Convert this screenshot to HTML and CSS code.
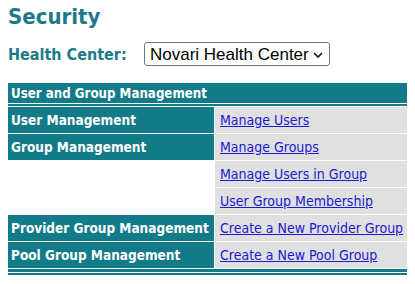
FILE: index.html
```html
<!DOCTYPE html>
<html lang="en">
<head>
    <meta charset="UTF-8">
    <meta name="viewport" content="width=device-width, initial-scale=1.0">
    <title>Security</title>
<link rel="stylesheet" href="styles.css">
</head>
<body>
    <h1 class="page-title">Security</h1>

    <div class="center-row">
        <label for="center" class="center-label">Health Center:</label>
        <span class="select-wrap">
            <select id="center" class="center-select">
                <option>Novari Health Center</option>
            </select>
            <svg class="select-arrow" width="10" height="6" viewBox="0 0 10 6"><path d="M1 1 L5 5 L9 1" fill="none" stroke="#111" stroke-width="1.6"/></svg>
        </span>
    </div>

    <table class="menu">
        <thead>
            <tr><th colspan="2">User and Group Management</th></tr>
            <tr class="rule"><td colspan="2"></td></tr>
        </thead>
        <tbody>
            <tr>
                <td class="section">User Management</td>
                <td class="links"><a href="#">Manage Users</a></td>
            </tr>
            <tr>
                <td class="section">Group Management</td>
                <td class="links"><a href="#">Manage Groups</a></td>
            </tr>
            <tr>
                <td class="blank"></td>
                <td class="links"><a href="#">Manage Users in Group</a></td>
            </tr>
            <tr>
                <td class="blank"></td>
                <td class="links"><a href="#">User Group Membership</a></td>
            </tr>
            <tr>
                <td class="section">Provider Group Management</td>
                <td class="links"><a href="#">Create a New Provider Group</a></td>
            </tr>
            <tr>
                <td class="section">Pool Group Management</td>
                <td class="links"><a href="#">Create a New Pool Group</a></td>
            </tr>
        </tbody>
        <tfoot>
            <tr class="rule rule-bottom"><td colspan="2"></td></tr>
        </tfoot>
    </table>
</body>
</html>
```

FILE: styles.css
```css
body {
    font-family: "DejaVu Sans Condensed", "DejaVu Sans", sans-serif;
    font-stretch: condensed;
    background-color: #ffffff;
    margin: 8px;
}

.page-title {
    margin: 0;
    font-size: 22px;
    line-height: 18px;
    color: #1c7a88;
}

.center-row {
    display: flex;
    align-items: center;
    margin-top: 16px;
}

.center-label {
    width: 136px;
    font-size: 16px;
    font-weight: bold;
    color: #1c7a88;
}

.select-wrap {
    position: relative;
    display: inline-block;
}

.center-select {
    appearance: none;
    -webkit-appearance: none;
    width: 186px;
    height: 24px;
    padding: 0 0 0 5px;
    font-family: "Liberation Sans", Arial, sans-serif;
    font-size: 17px;
    color: #000;
    background: #fff;
    border: 1px solid #767676;
    border-radius: 3px;
}

.select-arrow {
    position: absolute;
    right: 7px;
    top: 10px;
    pointer-events: none;
}

.menu {
    width: 401px;
    margin-top: 17px;
    border-collapse: separate;
    border-spacing: 0;
    border-bottom: 2px solid #137b88;
}

.menu th {
    height: 20px;
    padding: 0 0 0 3px;
    background-color: #137b88;
    color: #ffffff;
    font-size: 13.2px;
    text-align: left;
}

.menu td {
    height: 26px;
    padding: 0;
    border-bottom: 1px solid #ffffff;
    font-size: 13.5px;
    vertical-align: middle;
}

.menu .rule td {
    height: 2px;
    background-color: #137b88;
    border-top: 1px solid #ffffff;
    border-bottom: 1px solid #ffffff;
}

.menu .rule-bottom td {
    height: 3px;
    border-top: none;
}

.menu .section {
    width: 203px;
    padding-left: 3px;
    background-color: #137b88;
    color: #ffffff;
    font-weight: bold;
    border-right: 1px solid #ffffff;
}

.menu .blank {
    border-right: 1px solid #ffffff;
}

.menu .links {
    padding-left: 5px;
    background-color: #e0e0e0;
    font-size: 14px;
}

.links a {
    color: #1a1ad0;
}
```
